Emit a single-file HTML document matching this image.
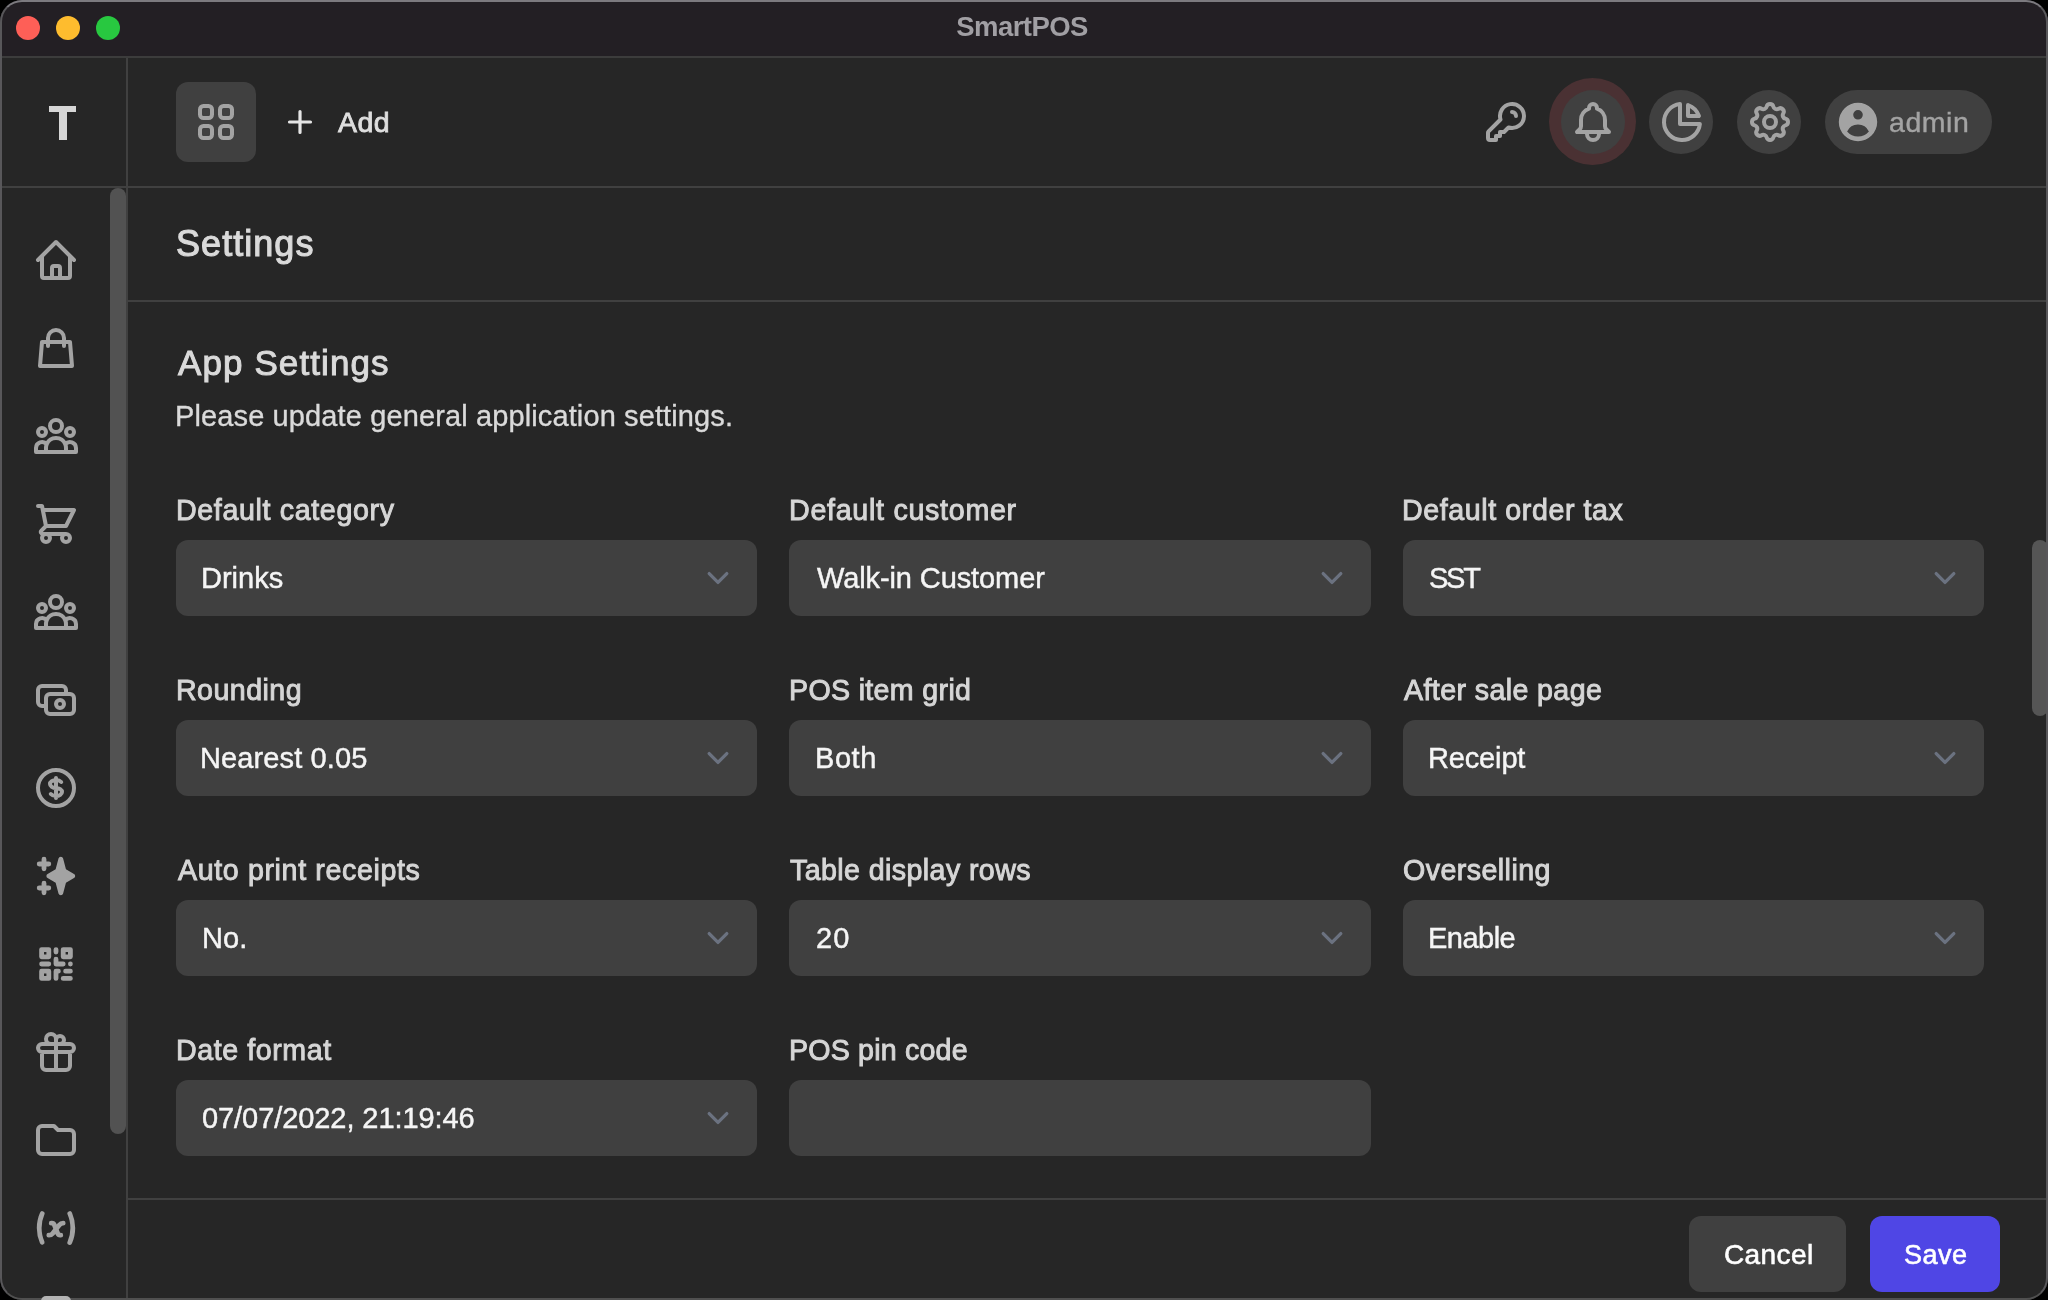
<!DOCTYPE html>
<html><head><meta charset="utf-8">
<style>
*{margin:0;padding:0;box-sizing:border-box}
html,body{width:2048px;height:1300px;background:#000;overflow:hidden}
body{font-family:"Liberation Sans",sans-serif;position:relative}
.abs{position:absolute}
#win{position:absolute;left:0;top:0;width:2048px;height:1300px;border-radius:22px;background:#262626;overflow:hidden}
#frame{position:absolute;left:0;top:0;width:2048px;height:1300px;border-radius:22px;border:2px solid #58575a;border-top-color:#7c7a7f;border-bottom-color:#505050;z-index:50}
#titlebar{position:absolute;left:0;top:0;width:2048px;height:56px;background:#231f24}
#tbline{position:absolute;left:0;top:56px;width:2048px;height:2px;background:#3c3c3c}
.tl{position:absolute;top:16px;width:24px;height:24px;border-radius:50%}
#title{will-change:transform;position:absolute;left:-2px;width:2048px;top:12px;text-align:center;font-weight:bold;font-size:27.5px;letter-spacing:-0.55px;color:#a19fa4;line-height:30px}
.hline{position:absolute;height:2px;background:#404040}
.vline{position:absolute;width:2px;background:#404040}
.txt{position:absolute;white-space:nowrap;line-height:1;will-change:transform}
.med{-webkit-text-stroke:0.45px currentColor}
.label{font-size:28.6px;color:#d6d6d6;-webkit-text-stroke:0.95px #d6d6d6}
.val{font-size:29px;color:#f5f5f5;-webkit-text-stroke:0.45px #f5f5f5}
.sel{position:absolute;width:581.33px;height:76px;background:#404040;border-radius:12px}
.sel .v{position:absolute;left:26px;top:23px;font-size:29px;color:#f5f5f5;white-space:nowrap;line-height:1;-webkit-text-stroke:0.35px #f5f5f5}
.ico{position:absolute;fill:none;stroke:#a3a3a3;stroke-width:1.5;stroke-linecap:round;stroke-linejoin:round}
</style></head>
<body>
<div id="win">
  <div id="titlebar"></div>
  <div id="tbline"></div>
  <div class="tl" style="left:16px;background:#fe5f57"></div>
  <div class="tl" style="left:56px;background:#febc2e"></div>
  <div class="tl" style="left:96px;background:#28c840"></div>
  <div id="title">SmartPOS</div>

  <!-- structure lines (coords relative to window inner: subtract 2) -->
  <div class="vline" style="left:126px;top:58px;height:1300px"></div>
  <div class="hline" style="left:0;top:186px;width:2048px"></div>
  <div class="hline" style="left:128px;top:300px;width:1920px"></div>
  <div class="hline" style="left:128px;top:1198px;width:1920px"></div>

  <!-- logo -->
  <div class="abs" style="left:49px;top:106px;width:27.4px;height:6.2px;background:#d6d6d6"></div>
  <div class="abs" style="left:58.8px;top:106px;width:7.9px;height:34px;background:#d6d6d6"></div>

  <!-- sidebar scrollbar -->
  <div class="abs" style="left:110px;top:188px;width:16px;height:946px;border-radius:8px;background:#525252"></div>

  <!-- header -->
  <div class="abs" style="left:176px;top:82px;width:80px;height:80px;border-radius:12px;background:#404040"></div>
  <div class="txt" style="left:337.5px;top:108px;font-size:28.5px;letter-spacing:0.4px;color:#dedede;-webkit-text-stroke:0.85px #dedede">Add</div>

  <!-- sidebar icons -->
  <svg class="abs" style="left:32px;top:236px" width="48" height="48" viewBox="0 0 24 24" fill="none" stroke="#a3a3a3" stroke-width="2" stroke-linecap="round" stroke-linejoin="round"><path d="M3 12l2-2m0 0l7-7 7 7M5 10v10a1 1 0 001 1h3m10-11l2 2m-2-2v10a1 1 0 01-1 1h-3m-6 0a1 1 0 001-1v-4a1 1 0 011-1h2a1 1 0 011 1v4a1 1 0 001 1m-6 0h6"/></svg>
  <svg class="abs" style="left:32px;top:324px" width="48" height="48" viewBox="0 0 24 24" fill="none" stroke="#a3a3a3" stroke-width="2" stroke-linecap="round" stroke-linejoin="round"><path d="M16 11V7a4 4 0 00-8 0v4M5 9h14l1 12H4L5 9z"/></svg>
  <svg class="abs" style="left:32px;top:412px" width="48" height="48" viewBox="0 0 24 24" fill="none" stroke="#a3a3a3" stroke-width="2" stroke-linecap="round" stroke-linejoin="round"><path d="M17 20h5v-2a3 3 0 00-5.356-1.857M17 20H7m10 0v-2c0-.656-.126-1.283-.356-1.857M7 20H2v-2a3 3 0 015.356-1.857M7 20v-2c0-.656.126-1.283.356-1.857m0 0a5.002 5.002 0 019.288 0M15 7a3 3 0 11-6 0 3 3 0 016 0zm6 3a2 2 0 11-4 0 2 2 0 014 0zM7 10a2 2 0 11-4 0 2 2 0 014 0z"/></svg>
  <svg class="abs" style="left:32px;top:500px" width="48" height="48" viewBox="0 0 24 24" fill="none" stroke="#a3a3a3" stroke-width="2" stroke-linecap="round" stroke-linejoin="round"><path d="M3 3h2l.4 2M7 13h10l4-8H5.4M7 13L5.4 5M7 13l-2.293 2.293c-.63.63-.184 1.707.707 1.707H17m0 0a2 2 0 100 4 2 2 0 000-4zm-8 2a2 2 0 11-4 0 2 2 0 014 0z"/></svg>
  <svg class="abs" style="left:32px;top:588px" width="48" height="48" viewBox="0 0 24 24" fill="none" stroke="#a3a3a3" stroke-width="2" stroke-linecap="round" stroke-linejoin="round"><path d="M17 20h5v-2a3 3 0 00-5.356-1.857M17 20H7m10 0v-2c0-.656-.126-1.283-.356-1.857M7 20H2v-2a3 3 0 015.356-1.857M7 20v-2c0-.656.126-1.283.356-1.857m0 0a5.002 5.002 0 019.288 0M15 7a3 3 0 11-6 0 3 3 0 016 0zm6 3a2 2 0 11-4 0 2 2 0 014 0zM7 10a2 2 0 11-4 0 2 2 0 014 0z"/></svg>
  <svg class="abs" style="left:32px;top:676px" width="48" height="48" viewBox="0 0 24 24" fill="none" stroke="#a3a3a3" stroke-width="2" stroke-linecap="round" stroke-linejoin="round"><path d="M17 9V7a2 2 0 00-2-2H5a2 2 0 00-2 2v6a2 2 0 002 2h2m2 4h10a2 2 0 002-2v-6a2 2 0 00-2-2H9a2 2 0 00-2 2v6a2 2 0 002 2zm7-5a2 2 0 11-4 0 2 2 0 014 0z"/></svg>
  <svg class="abs" style="left:32px;top:764px" width="48" height="48" viewBox="0 0 24 24" fill="none" stroke="#a3a3a3" stroke-width="2" stroke-linecap="round" stroke-linejoin="round"><path d="M12 8c-1.657 0-3 .895-3 2s1.343 2 3 2 3 .895 3 2-1.343 2-3 2m0-8c1.11 0 2.08.402 2.599 1M12 8V7m0 1v8m0 0v1m0-1c-1.11 0-2.08-.402-2.599-1M21 12a9 9 0 11-18 0 9 9 0 0118 0z"/></svg>
  <svg class="abs" style="left:32px;top:852px" width="48" height="48" viewBox="0 0 20 20"><path fill="#a3a3a3" fill-rule="evenodd" d="M5 2a1 1 0 011 1v1h1a1 1 0 010 2H6v1a1 1 0 01-2 0V6H3a1 1 0 010-2h1V3a1 1 0 011-1zm0 10a1 1 0 011 1v1h1a1 1 0 110 2H6v1a1 1 0 11-2 0v-1H3a1 1 0 110-2h1v-1a1 1 0 011-1zM12 2a1 1 0 01.967.744L14.146 7.2 17.5 9.134a1 1 0 010 1.732l-3.354 1.935-1.18 4.455a1 1 0 01-1.933 0L9.854 12.8 6.5 10.866a1 1 0 010-1.732l3.354-1.935 1.18-4.455A1 1 0 0112 2z"/></svg>
  <svg class="abs" style="left:32px;top:940px" width="48" height="48" viewBox="0 0 20 20" fill="#a3a3a3"><path fill-rule="evenodd" d="M3 4a1 1 0 011-1h3a1 1 0 011 1v3a1 1 0 01-1 1H4a1 1 0 01-1-1V4zm2 2V5h1v1H5zM3 13a1 1 0 011-1h3a1 1 0 011 1v3a1 1 0 01-1 1H4a1 1 0 01-1-1v-3zm2 2v-1h1v1H5zM13 3a1 1 0 00-1 1v3a1 1 0 001 1h3a1 1 0 001-1V4a1 1 0 00-1-1h-3zm1 2v1h1V5h-1z"/><path d="M11 4a1 1 0 10-2 0v1a1 1 0 002 0V4zM10 7a1 1 0 011 1v1h2a1 1 0 110 2h-3a1 1 0 01-1-1V8a1 1 0 011-1zM16 9a1 1 0 100 2 1 1 0 000-2zM9 13a1 1 0 011-1h1a1 1 0 110 2v2a1 1 0 11-2 0v-3zM7 11a1 1 0 100-2H4a1 1 0 100 2h3zM17 13a1 1 0 01-1 1h-2a1 1 0 110-2h2a1 1 0 011 1zM16 17a1 1 0 100-2h-3a1 1 0 100 2h3z"/></svg>
  <svg class="abs" style="left:32px;top:1028px" width="48" height="48" viewBox="0 0 24 24" fill="none" stroke="#a3a3a3" stroke-width="2" stroke-linecap="round" stroke-linejoin="round"><path d="M12 8v13m0-13V6a2 2 0 112 2h-2zm0 0V5.5A2.5 2.5 0 109.5 8H12zm-7 4h14M5 12a2 2 0 110-4h14a2 2 0 110 4M5 12v7a2 2 0 002 2h10a2 2 0 002-2v-7"/></svg>
  <svg class="abs" style="left:32px;top:1116px" width="48" height="48" viewBox="0 0 24 24" fill="none" stroke="#a3a3a3" stroke-width="2" stroke-linecap="round" stroke-linejoin="round"><path d="M3 7v10a2 2 0 002 2h14a2 2 0 002-2V9a2 2 0 00-2-2h-6l-2-2H5a2 2 0 00-2 2z"/></svg>
  <svg class="abs" style="left:32px;top:1204px" width="48" height="48" viewBox="0 0 20 20"><path fill="#a3a3a3" fill-rule="evenodd" d="M4.649 3.084A1 1 0 015.163 4.4 13.95 13.95 0 004 10c0 1.993.416 3.886 1.164 5.6a1 1 0 01-1.832.8A15.95 15.95 0 012 10c0-2.274.475-4.44 1.332-6.4a1 1 0 011.317-.516zM12.96 7a3 3 0 00-2.342 1.126l-.328.41-.111-.279A2 2 0 008.323 7H8a1 1 0 000 2h.323l.532 1.33-1.035 1.295a1 1 0 01-.781.375H7a1 1 0 100 2h.039a3 3 0 002.342-1.126l.328-.41.111.279A2 2 0 0011.677 14H12a1 1 0 100-2h-.323l-.532-1.33 1.035-1.295A1 1 0 0112.961 9H13a1 1 0 100-2h-.039zm1.874-2.6a1 1 0 011.833-.8A15.95 15.95 0 0118 10c0 2.274-.475 4.44-1.332 6.4a1 1 0 11-1.832-.8A13.949 13.949 0 0016 10c0-1.993-.416-3.886-1.165-5.6z"/></svg>
  
  <!-- header icons -->
  <svg class="abs" style="left:1482px;top:98px" width="48" height="48" viewBox="0 0 24 24" fill="none" stroke="#a3a3a3" stroke-width="2" stroke-linecap="round" stroke-linejoin="round"><path d="M15 7a2 2 0 012 2m4 0a6 6 0 01-7.743 5.743L11 17H9v2H7v2H4a1 1 0 01-1-1v-2.586a1 1 0 01.293-.707l5.964-5.964A6 6 0 1121 9z"/></svg>
  <div class="abs" style="left:1549.4px;top:78.2px;width:87px;height:87px;border-radius:50%;background:#4a3133"></div>
  <div class="abs" style="left:1561px;top:90px;width:64px;height:64px;border-radius:50%;background:#404040"></div>
  <svg class="abs" style="left:1569px;top:98px" width="48" height="48" viewBox="0 0 24 24" fill="none" stroke="#a3a3a3" stroke-width="2" stroke-linecap="round" stroke-linejoin="round"><path d="M15 17h5l-1.405-1.405A2.032 2.032 0 0118 14.158V11a6.002 6.002 0 00-4-5.659V5a2 2 0 10-4 0v.341C7.67 6.165 6 8.388 6 11v3.159c0 .538-.214 1.055-.595 1.436L4 17h5m6 0v1a3 3 0 11-6 0v-1m6 0H9"/></svg>
  <div class="abs" style="left:1649px;top:90px;width:64px;height:64px;border-radius:50%;background:#404040"></div>
  <svg class="abs" style="left:1658px;top:98px" width="48" height="48" viewBox="0 0 24 24" fill="none" stroke="#a3a3a3" stroke-width="2" stroke-linecap="round" stroke-linejoin="round"><path d="M11 3.055A9.001 9.001 0 1020.945 13H11V3.055z M20.488 9H15V3.512A9.025 9.025 0 0120.488 9z"/></svg>
  <div class="abs" style="left:1737px;top:90px;width:64px;height:64px;border-radius:50%;background:#404040"></div>
  <svg class="abs" style="left:1746px;top:98px" width="48" height="48" viewBox="0 0 24 24" fill="none" stroke="#a3a3a3" stroke-width="2" stroke-linecap="round" stroke-linejoin="round"><path d="M10.325 4.317c.426-1.756 2.924-1.756 3.35 0a1.724 1.724 0 002.573 1.066c1.543-.94 3.31.826 2.37 2.37a1.724 1.724 0 001.065 2.572c1.756.426 1.756 2.924 0 3.35a1.724 1.724 0 00-1.066 2.573c.94 1.543-.826 3.31-2.37 2.37a1.724 1.724 0 00-2.572 1.065c-.426 1.756-2.924 1.756-3.35 0a1.724 1.724 0 00-2.573-1.066c-1.543.94-3.31-.826-2.37-2.37a1.724 1.724 0 00-1.065-2.572c-1.756-.426-1.756-2.924 0-3.35a1.724 1.724 0 001.066-2.573c-.94-1.543.826-3.31 2.37-2.37.996.608 2.296.07 2.572-1.065z M15 12a3 3 0 11-6 0 3 3 0 016 0z"/></svg>
  <div class="abs" style="left:1825px;top:90px;width:167px;height:64px;border-radius:32px;background:#404040"></div>
  <svg class="abs" style="left:1834px;top:98px" width="48" height="48" viewBox="0 0 20 20"><path fill="#a3a3a3" fill-rule="evenodd" d="M18 10a8 8 0 11-16 0 8 8 0 0116 0zm-6-3a2 2 0 11-4 0 2 2 0 014 0zm-2 4a5 5 0 00-4.546 2.916A5.986 5.986 0 0010 16a5.986 5.986 0 004.546-2.084A5 5 0 0010 11z"/></svg>
  <div class="txt" style="left:1889px;top:108px;font-size:28.5px;letter-spacing:0.55px;color:#a3a3a3;-webkit-text-stroke:0.4px #a3a3a3">admin</div>
  <svg class="abs" style="left:176px;top:82px" width="80" height="80" viewBox="0 0 80 80" fill="none" stroke="#a3a3a3" stroke-width="4"><rect x="24" y="24" width="12" height="12" rx="3.5"/><rect x="44" y="24" width="12" height="12" rx="3.5"/><rect x="24" y="44" width="12" height="12" rx="3.5"/><rect x="44" y="44" width="12" height="12" rx="3.5"/></svg>
  <svg class="abs" style="left:286px;top:108px" width="28" height="28" viewBox="0 0 28 28" fill="none" stroke="#e5e5e5" stroke-width="3.2" stroke-linecap="round"><path d="M14 3.5v21M3.5 14h21"/></svg>

  <!-- page title -->
  <div class="txt" style="left:176px;top:226px;font-size:36px;color:#dadada;letter-spacing:1.05px;-webkit-text-stroke:1.1px #dadada">Settings</div>
  <div class="txt" style="left:178px;top:345.3px;font-size:35px;color:#dadada;letter-spacing:1.1px;-webkit-text-stroke:1px #dadada">App Settings</div>
  <div class="txt" style="left:174.8px;top:402.3px;font-size:29px;color:#dadada;letter-spacing:0.12px;-webkit-text-stroke:0.35px #dadada">Please update general application settings.</div>

  <!-- form -->
  <div class="txt label" style="left:176.30px;top:495.8px;letter-spacing:0.653px">Default category</div>
  <div class="sel" style="left:176.00px;top:540px"></div>
  <div class="txt val" style="left:201.10px;top:563.7px;letter-spacing:0.000px">Drinks</div>
  <svg width="44" height="44" viewBox="0 0 20 20" style="position:absolute;left:696.20px;top:556.1px"><path d="M6 8l4 4 4-4" fill="none" stroke="#6b7280" stroke-width="1.5" stroke-linecap="round" stroke-linejoin="round"/></svg>
  <div class="txt label" style="left:788.93px;top:495.8px;letter-spacing:0.733px">Default customer</div>
  <div class="sel" style="left:789.33px;top:540px"></div>
  <div class="txt val" style="left:816.83px;top:563.7px;letter-spacing:-0.100px">Walk-in Customer</div>
  <svg width="44" height="44" viewBox="0 0 20 20" style="position:absolute;left:1309.53px;top:556.1px"><path d="M6 8l4 4 4-4" fill="none" stroke="#6b7280" stroke-width="1.5" stroke-linecap="round" stroke-linejoin="round"/></svg>
  <div class="txt label" style="left:1402.27px;top:495.8px;letter-spacing:0.594px">Default order tax</div>
  <div class="sel" style="left:1402.67px;top:540px"></div>
  <div class="txt val" style="left:1429.07px;top:563.7px;letter-spacing:-2.250px">SST</div>
  <svg width="44" height="44" viewBox="0 0 20 20" style="position:absolute;left:1922.87px;top:556.1px"><path d="M6 8l4 4 4-4" fill="none" stroke="#6b7280" stroke-width="1.5" stroke-linecap="round" stroke-linejoin="round"/></svg>
  <div class="txt label" style="left:176.30px;top:675.8px;letter-spacing:0.457px">Rounding</div>
  <div class="sel" style="left:176.00px;top:720px"></div>
  <div class="txt val" style="left:200.40px;top:743.7px;letter-spacing:0.118px">Nearest 0.05</div>
  <svg width="44" height="44" viewBox="0 0 20 20" style="position:absolute;left:696.20px;top:736.1px"><path d="M6 8l4 4 4-4" fill="none" stroke="#6b7280" stroke-width="1.5" stroke-linecap="round" stroke-linejoin="round"/></svg>
  <div class="txt label" style="left:788.93px;top:675.8px;letter-spacing:0.333px">POS item grid</div>
  <div class="sel" style="left:789.33px;top:720px"></div>
  <div class="txt val" style="left:814.83px;top:743.7px;letter-spacing:0.567px">Both</div>
  <svg width="44" height="44" viewBox="0 0 20 20" style="position:absolute;left:1309.53px;top:736.1px"><path d="M6 8l4 4 4-4" fill="none" stroke="#6b7280" stroke-width="1.5" stroke-linecap="round" stroke-linejoin="round"/></svg>
  <div class="txt label" style="left:1404.27px;top:675.8px;letter-spacing:0.393px">After sale page</div>
  <div class="sel" style="left:1402.67px;top:720px"></div>
  <div class="txt val" style="left:1428.07px;top:743.7px;letter-spacing:-0.150px">Receipt</div>
  <svg width="44" height="44" viewBox="0 0 20 20" style="position:absolute;left:1922.87px;top:736.1px"><path d="M6 8l4 4 4-4" fill="none" stroke="#6b7280" stroke-width="1.5" stroke-linecap="round" stroke-linejoin="round"/></svg>
  <div class="txt label" style="left:178.30px;top:855.8px;letter-spacing:0.633px">Auto print receipts</div>
  <div class="sel" style="left:176.00px;top:900px"></div>
  <div class="txt val" style="left:201.60px;top:923.7px;letter-spacing:0.100px">No.</div>
  <svg width="44" height="44" viewBox="0 0 20 20" style="position:absolute;left:696.20px;top:916.1px"><path d="M6 8l4 4 4-4" fill="none" stroke="#6b7280" stroke-width="1.5" stroke-linecap="round" stroke-linejoin="round"/></svg>
  <div class="txt label" style="left:790.33px;top:855.8px;letter-spacing:0.406px">Table display rows</div>
  <div class="sel" style="left:789.33px;top:900px"></div>
  <div class="txt val" style="left:815.83px;top:923.7px;letter-spacing:1.100px">20</div>
  <svg width="44" height="44" viewBox="0 0 20 20" style="position:absolute;left:1309.53px;top:916.1px"><path d="M6 8l4 4 4-4" fill="none" stroke="#6b7280" stroke-width="1.5" stroke-linecap="round" stroke-linejoin="round"/></svg>
  <div class="txt label" style="left:1403.27px;top:855.8px;letter-spacing:0.440px">Overselling</div>
  <div class="sel" style="left:1402.67px;top:900px"></div>
  <div class="txt val" style="left:1428.07px;top:923.7px;letter-spacing:-0.520px">Enable</div>
  <svg width="44" height="44" viewBox="0 0 20 20" style="position:absolute;left:1922.87px;top:916.1px"><path d="M6 8l4 4 4-4" fill="none" stroke="#6b7280" stroke-width="1.5" stroke-linecap="round" stroke-linejoin="round"/></svg>
  <div class="txt label" style="left:176.30px;top:1035.8px;letter-spacing:0.570px">Date format</div>
  <div class="sel" style="left:176.00px;top:1080px"></div>
  <div class="txt val" style="left:202.10px;top:1103.7px;letter-spacing:-0.074px">07/07/2022, 21:19:46</div>
  <svg width="44" height="44" viewBox="0 0 20 20" style="position:absolute;left:696.20px;top:1096.1px"><path d="M6 8l4 4 4-4" fill="none" stroke="#6b7280" stroke-width="1.5" stroke-linecap="round" stroke-linejoin="round"/></svg>
  <div class="txt label" style="left:789.33px;top:1035.8px;letter-spacing:0.191px">POS pin code</div>
  <div class="sel" style="left:789.33px;top:1080px"></div>

  <!-- right scrollbar -->
  <div class="abs" style="left:2032px;top:540px;width:16px;height:176px;border-radius:8px;background:#555555"></div>

  <!-- buttons -->
  <div class="abs" style="left:1689px;top:1216px;width:157px;height:76px;border-radius:12px;background:#404040"></div>
  <div class="abs" style="left:1870px;top:1216px;width:130px;height:76px;border-radius:12px;background:#4f46e5"></div>
  <div class="txt" style="left:1724px;top:1240.5px;font-size:28px;letter-spacing:0.4px;color:#fff;-webkit-text-stroke:0.6px #fff">Cancel</div>
  <div class="txt" style="left:1903.5px;top:1242px;font-size:27px;letter-spacing:0.5px;color:#fff;-webkit-text-stroke:0.6px #fff">Save</div>
</div>
<div id="frame"></div>
<div class="abs" style="left:40.7px;top:1295.7px;width:30.7px;height:10px;border-radius:5px 5px 0 0;background:#b3b3b3;z-index:60"></div>
</body></html>
